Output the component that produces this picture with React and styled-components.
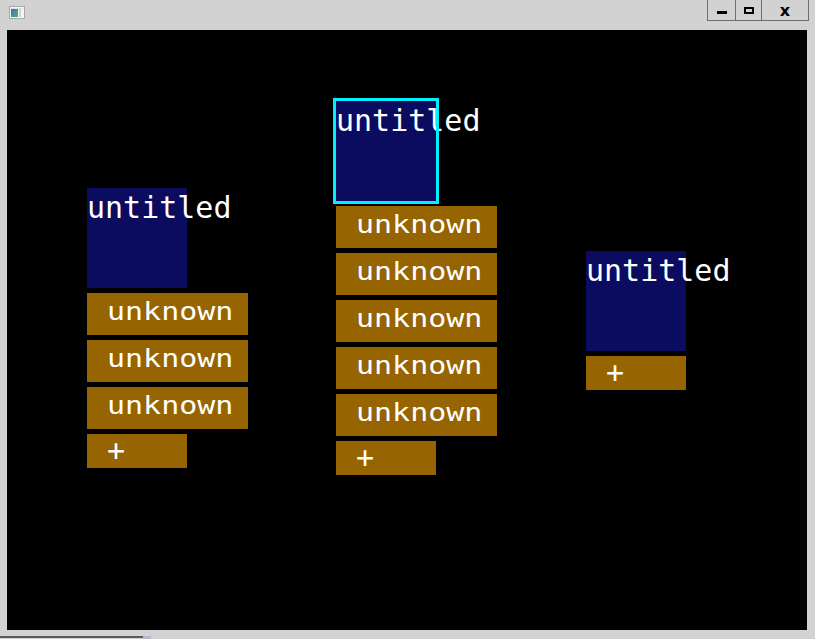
import React from "react";
import styled, { createGlobalStyle } from "styled-components";

const GlobalStyle = createGlobalStyle`
  html, body {
    margin: 0;
    padding: 0;
    background: #d2d2d2;
    overflow: hidden;
  }
  body {
    font-family: "DejaVu Sans Mono", monospace;
  }
`;

const Window = styled.div`
  width: 815px;
  height: 639px;
  display: flex;
  flex-direction: column;
  background: #d2d2d2;
`;

const TitleBar = styled.div`
  height: 30px;
  display: flex;
  align-items: flex-start;
  justify-content: space-between;
`;

const AppIcon = styled.svg`
  margin: 6px 0 0 9px;
`;

const Controls = styled.div`
  display: flex;
  margin-right: 6px;
  height: 21px;
  border-left: 1px solid #6e6e6e;
  border-bottom: 1px solid #6e6e6e;
  box-sizing: border-box;
`;

const CtlButton = styled.div`
  width: ${(p) => p.$w}px;
  height: 100%;
  display: flex;
  align-items: center;
  justify-content: center;
  border-right: 1px solid #6e6e6e;
  box-sizing: border-box;
  font-family: "DejaVu Sans", sans-serif;
  font-weight: bold;
  font-size: 16px;
  color: #000;
`;

const MinGlyph = styled.div`
  width: 10px;
  height: 3px;
  background: #000;
  margin-top: 5px;
`;

const MaxGlyph = styled.div`
  width: 10px;
  height: 7px;
  border: 2px solid #000;
  box-sizing: border-box;
`;

const Middle = styled.div`
  display: flex;
  padding-left: 7px;
`;

const Canvas = styled.div`
  position: relative;
  width: 800px;
  height: 600px;
  background: #000;
`;

const Footer = styled.div`
  margin-top: 6px;
  height: 3px;
  display: flex;
`;

const FooterLine = styled.div`
  width: 143px;
  height: 2px;
  background: #5a5a5a;
`;

const FooterGrip = styled.div`
  width: 8px;
  height: 3px;
  background: #b8b8c8;
`;

const Node = styled.div`
  position: absolute;
  left: ${(p) => p.$x}px;
  top: ${(p) => p.$y}px;
  display: flex;
  flex-direction: column;
  gap: 5px;
`;

const Header = styled.div`
  width: 100px;
  height: 100px;
  box-sizing: border-box;
  background: #0b0b60;
  padding-top: 2px;
  outline: ${(p) => (p.$selected ? "3px solid #00f0ff" : "none")};
  color: #fff;
  font-size: 30px;
  line-height: 35px;
  white-space: nowrap;
`;

const Field = styled.div`
  width: 161px;
  height: 42px;
  box-sizing: border-box;
  background: #966400;
  display: flex;
  align-items: center;
  padding-left: 20px;
`;

const FieldLabel = styled.span`
  display: block;
  color: #fff;
  font-size: 30px;
  line-height: 35px;
  white-space: nowrap;
  transform: translateY(-2.5px) scaleY(0.8);
`;

const AddButton = styled.div`
  width: 100px;
  height: 34px;
  box-sizing: border-box;
  background: #966400;
  color: #fff;
  font-size: 30px;
  line-height: 34px;
  padding-left: 20px;
`;

const nodes = [
  { x: 80, y: 158, fields: 3 },
  { x: 329, y: 71, fields: 5, selected: true },
  { x: 579, y: 221, fields: 0 },
];

export default function App() {
  return (
    <>
      <GlobalStyle />
      <Window>
        <TitleBar>
          <AppIcon width="16" height="13" viewBox="0 0 16 13">
            <defs>
              <linearGradient id="ig" x1="0" y1="0" x2="1" y2="1">
                <stop offset="0" stopColor="#3a6fc0" />
                <stop offset="1" stopColor="#4fb07a" />
              </linearGradient>
            </defs>
            <rect x="0.5" y="0.5" width="15" height="12" fill="#f4f4f4" stroke="#a8a8a8" />
            <rect x="2" y="3" width="7" height="8" fill="url(#ig)" />
            <rect x="10" y="3" width="2" height="8" fill="#c8d8d0" />
            <rect x="2" y="2" width="12" height="1" fill="#e0e0e0" />
          </AppIcon>
          <Controls>
            <CtlButton $w={28}>
              <MinGlyph />
            </CtlButton>
            <CtlButton $w={26}>
              <MaxGlyph />
            </CtlButton>
            <CtlButton $w={47}>x</CtlButton>
          </Controls>
        </TitleBar>
        <Middle>
          <Canvas>
            {nodes.map((n, i) => (
              <Node key={i} $x={n.x} $y={n.y}>
                <Header $selected={n.selected}>untitled</Header>
                {Array.from({ length: n.fields }).map((_, j) => (
                  <Field key={j}>
                    <FieldLabel>unknown</FieldLabel>
                  </Field>
                ))}
                <AddButton>+</AddButton>
              </Node>
            ))}
          </Canvas>
        </Middle>
        <Footer>
          <FooterLine />
          <FooterGrip />
        </Footer>
      </Window>
    </>
  );
}
